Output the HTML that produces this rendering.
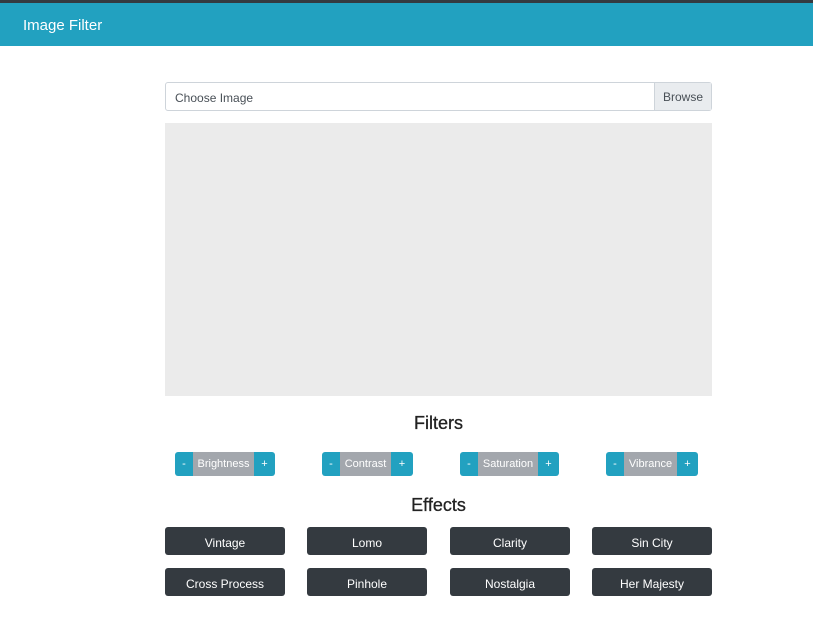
<!DOCTYPE html>
<html><head><style>
*{box-sizing:border-box;margin:0;padding:0}
body{width:813px;height:626px;background:#fff;font-family:"Liberation Sans",sans-serif;position:relative;overflow:hidden}
.top{position:absolute;left:0;top:0;width:813px;height:3px;background:#343a40}
.nav{position:absolute;left:0;top:3px;width:813px;height:43px;background:#22a1c0;color:#fff;font-size:15px;line-height:45px;padding-left:23px}
.inp{position:absolute;left:165px;top:82px;width:547px;height:29px;border:1px solid #ced4da;border-radius:3px;font-size:12px;color:#495057;line-height:31px;padding-left:9px}
.br{position:absolute;right:0;top:0;height:27px;width:57px;background:#e9ecef;border-left:1px solid #ced4da;text-align:center}
.img{position:absolute;left:165px;top:123px;width:547px;height:273px;background:#ebebeb}
h2{position:absolute;left:165px;width:547px;text-align:center;font-size:18px;font-weight:normal;color:#222;-webkit-text-stroke:0.3px #222}
.g{position:absolute;top:452px;height:24px;display:flex;font-size:11px;color:#fff;line-height:24px}
.g span{display:block;text-align:center}
.m{background:#22a1c0;width:18px;border-radius:3px 0 0 3px}
.p{background:#22a1c0;width:21px;border-radius:0 3px 3px 0}
.l{background:#a3a7ad}
.b{position:absolute;width:120px;height:28px;background:#343a40;color:#fff;border-radius:3px;font-size:12px;text-align:center;line-height:32px}
</style></head><body>
<div class="top"></div>
<div class="nav">Image Filter</div>
<div class="inp">Choose Image<div class="br" style="line-height:29px">Browse</div></div>
<div class="img"></div>
<h2 style="top:413px">Filters</h2>
<div class="g" style="left:175px"><span class="m">-</span><span class="l" style="width:61px">Brightness</span><span class="p">+</span></div>
<div class="g" style="left:322px"><span class="m">-</span><span class="l" style="width:51px">Contrast</span><span class="p" style="width:22px">+</span></div>
<div class="g" style="left:460px"><span class="m">-</span><span class="l" style="width:60px">Saturation</span><span class="p">+</span></div>
<div class="g" style="left:606px"><span class="m">-</span><span class="l" style="width:53px">Vibrance</span><span class="p">+</span></div>
<h2 style="top:495px">Effects</h2>
<div class="b" style="left:165px;top:527px">Vintage</div>
<div class="b" style="left:307px;top:527px">Lomo</div>
<div class="b" style="left:450px;top:527px">Clarity</div>
<div class="b" style="left:592px;top:527px">Sin City</div>
<div class="b" style="left:165px;top:568px">Cross Process</div>
<div class="b" style="left:307px;top:568px">Pinhole</div>
<div class="b" style="left:450px;top:568px">Nostalgia</div>
<div class="b" style="left:592px;top:568px">Her Majesty</div>
</body></html>
